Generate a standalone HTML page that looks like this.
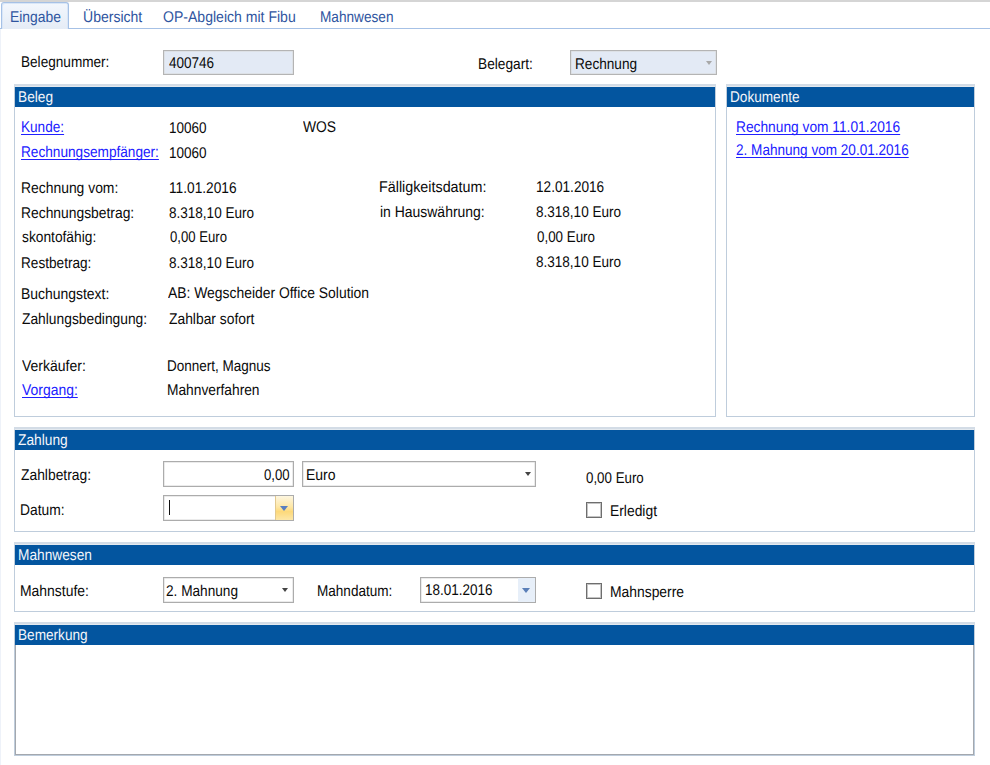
<!DOCTYPE html>
<html><head><meta charset="utf-8"><style>
html,body{margin:0;padding:0;}
body{width:990px;height:765px;overflow:hidden;background:#fff;position:relative;font-family:"Liberation Sans",sans-serif;}
.t{position:absolute;font-size:15.5px;line-height:18px;white-space:pre;transform-origin:0 0;text-rendering:geometricPrecision;}
.tab{color:#2f55a0;}
.lbl{color:#0a0a0a;}
.hdr{color:#f4f6fa;}
.lnk{color:#2020ff;text-decoration:underline;text-underline-offset:2px;text-decoration-thickness:1.3px;text-decoration-skip-ink:none;}
.abs{position:absolute;}
.pnl{position:absolute;border:1px solid #bfcddc;border-top:none;background:#fff;}
.hbar{position:absolute;left:0;right:0;top:0;height:3px;background:#d3dce6;}
.hbar2{position:absolute;left:0;right:0;top:2px;height:1px;background:#e3e9ef;}
.blue{position:absolute;left:0;right:0;top:3px;height:20px;background:#03559f;}
.box{position:absolute;border:1px solid #acacac;box-shadow:inset 0 0 0 0.5px #d8d8d8;background:#fff;box-sizing:border-box;}
.cb{position:absolute;width:16px;height:16px;box-sizing:border-box;border:1px solid #6e6e6e;box-shadow:inset 0 0 0 1px #c4c4c4;background:#fff;}
</style></head><body>
<div class="abs" style="left:0;top:0;width:990px;height:2px;background:#d5d5d5"></div>
<div class="abs" style="left:0;top:28px;width:990px;height:1px;background:#a6c1e6"></div>
<div class="abs" style="left:0;top:29px;width:1px;height:736px;background:#eef2f9"></div>
<div class="abs" style="left:1px;top:2px;width:66px;height:26px;border:1px solid #a6c1e6;border-bottom:none;border-radius:3px 3px 0 0;background:linear-gradient(#f3f7fd,#e5ecf6);box-shadow:inset 1px 1px 0 #d9e6f7,inset -1px 0 0 #d9e6f7"></div>

<div class="box" style="left:163px;top:50px;width:131px;height:25px;background:#e3eaf5;border-color:#b4b4b4"></div>
<div class="box" style="left:570px;top:50px;width:147px;height:25px;background:#e3eaf5;border-color:#b4b4b4"></div>
<div class="abs" style="left:706px;top:61px;width:0;height:0;border-left:3.5px solid transparent;border-right:3.5px solid transparent;border-top:4px solid #a8a8a8"></div>

<div class="pnl" style="left:14px;top:84px;width:700px;height:332px"></div>
<div class="abs" style="left:14px;top:84px;width:702px;height:3px;background:#d3dce6"></div>
<div class="abs" style="left:15px;top:86px;width:700px;height:1px;background:#e3e9ef"></div>
<div class="abs" style="left:15px;top:87px;width:700px;height:20px;background:#03559f"></div>

<div class="pnl" style="left:726px;top:84px;width:247px;height:332px"></div>
<div class="abs" style="left:726px;top:84px;width:249px;height:3px;background:#d3dce6"></div>
<div class="abs" style="left:727px;top:86px;width:247px;height:1px;background:#e3e9ef"></div>
<div class="abs" style="left:727px;top:87px;width:247px;height:20px;background:#03559f"></div>

<div class="pnl" style="left:14px;top:427px;width:959px;height:104px"></div>
<div class="abs" style="left:14px;top:427px;width:961px;height:3px;background:#d3dce6"></div>
<div class="abs" style="left:15px;top:429px;width:959px;height:1px;background:#e3e9ef"></div>
<div class="abs" style="left:15px;top:430px;width:959px;height:20px;background:#03559f"></div>

<div class="pnl" style="left:14px;top:542px;width:959px;height:69px"></div>
<div class="abs" style="left:14px;top:542px;width:961px;height:3px;background:#d3dce6"></div>
<div class="abs" style="left:15px;top:544px;width:959px;height:1px;background:#e3e9ef"></div>
<div class="abs" style="left:15px;top:545px;width:959px;height:20px;background:#03559f"></div>

<div class="pnl" style="left:14px;top:622px;width:959px;height:133px"></div>
<div class="abs" style="left:14px;top:622px;width:961px;height:3px;background:#d3dce6"></div>
<div class="abs" style="left:15px;top:624px;width:959px;height:1px;background:#e3e9ef"></div>
<div class="abs" style="left:15px;top:625px;width:959px;height:20px;background:#03559f"></div>
<div class="abs" style="left:15px;top:645px;width:957px;height:109px;border:1px solid #a4a8ae;border-top:none"></div>

<div class="box" style="left:163px;top:461px;width:131px;height:26px"></div>
<div class="box" style="left:302px;top:461px;width:234px;height:26px"></div>
<div class="abs" style="left:525px;top:472px;width:0;height:0;border-left:3.5px solid transparent;border-right:3.5px solid transparent;border-top:4px solid #444"></div>
<div class="box" style="left:163px;top:495px;width:131px;height:26px"></div>
<div class="abs" style="left:275px;top:496px;width:1px;height:24px;background:#e2c98f"></div>
<div class="abs" style="left:276px;top:496px;width:17px;height:24px;background:linear-gradient(#fdf6e0,#fee7a6 45%,#fdd97a 65%,#fde7a8)"></div>
<div class="abs" style="left:280px;top:506px;width:0;height:0;border-left:4.5px solid transparent;border-right:4.5px solid transparent;border-top:5px solid #5a7fc0"></div>
<div class="abs" style="left:169px;top:500px;width:1px;height:15px;background:#111"></div>
<div class="cb" style="left:586px;top:502px"></div>

<div class="box" style="left:163px;top:577px;width:131px;height:26px"></div>
<div class="abs" style="left:282px;top:588px;width:0;height:0;border-left:3.5px solid transparent;border-right:3.5px solid transparent;border-top:4px solid #444"></div>
<div class="box" style="left:420px;top:577px;width:116px;height:26px"></div>
<div class="abs" style="left:518px;top:578px;width:17px;height:24px;background:#e7eff9"></div>
<div class="abs" style="left:522px;top:588px;width:0;height:0;border-left:4.5px solid transparent;border-right:4.5px solid transparent;border-top:5px solid #5a7fb8"></div>
<div class="cb" style="left:586px;top:583px"></div>

<div class="t tab" style="left:9.70px;top:9px;transform:scaleX(0.8964)">Eingabe</div>
<div class="t tab" style="left:82.50px;top:9px;transform:scaleX(0.9046)">Übersicht</div>
<div class="t tab" style="left:163.29px;top:9px;transform:scaleX(0.9062)">OP-Abgleich mit Fibu</div>
<div class="t tab" style="left:320.12px;top:9px;transform:scaleX(0.8793)">Mahnwesen</div>
<div class="t lbl" style="left:21.22px;top:54px;transform:scaleX(0.8768)">Belegnummer:</div>
<div class="t lbl" style="left:168.60px;top:55px;transform:scaleX(0.8725)">400746</div>
<div class="t lbl" style="left:477.72px;top:56px;transform:scaleX(0.8833)">Belegart:</div>
<div class="t lbl" style="left:574.92px;top:56px;transform:scaleX(0.8783)">Rechnung</div>
<div class="t hdr" style="left:17.92px;top:89px;transform:scaleX(0.8842)">Beleg</div>
<div class="t hdr" style="left:730.12px;top:89px;transform:scaleX(0.8782)">Dokumente</div>
<div class="t hdr" style="left:18.00px;top:432px;transform:scaleX(0.8873)">Zahlung</div>
<div class="t hdr" style="left:17.72px;top:547px;transform:scaleX(0.8841)">Mahnwesen</div>
<div class="t hdr" style="left:17.72px;top:627px;transform:scaleX(0.8782)">Bemerkung</div>
<div class="t lnk" style="left:21.02px;top:119px;transform:scaleX(0.8766)">Kunde:</div>
<div class="t lbl" style="left:168.83px;top:120px;transform:scaleX(0.8714)">10060</div>
<div class="t lbl" style="left:303.40px;top:119px;transform:scaleX(0.8946)">WOS</div>
<div class="t lnk" style="left:21.42px;top:144px;transform:scaleX(0.8794)">Rechnungsempfänger:</div>
<div class="t lbl" style="left:168.83px;top:145px;transform:scaleX(0.8714)">10060</div>
<div class="t lbl" style="left:21.20px;top:180px;transform:scaleX(0.8962)">Rechnung vom:</div>
<div class="t lbl" style="left:168.62px;top:180px;transform:scaleX(0.8840)">11.01.2016</div>
<div class="t lbl" style="left:379.48px;top:179px;transform:scaleX(0.9237)">Fälligkeitsdatum:</div>
<div class="t lbl" style="left:536.02px;top:179px;transform:scaleX(0.8789)">12.01.2016</div>
<div class="t lbl" style="left:21.11px;top:205px;transform:scaleX(0.8935)">Rechnungsbetrag:</div>
<div class="t lbl" style="left:168.63px;top:205px;transform:scaleX(0.8729)">8.318,10 Euro</div>
<div class="t lbl" style="left:379.50px;top:204px;transform:scaleX(0.9000)">in Hauswährung:</div>
<div class="t lbl" style="left:536.03px;top:204px;transform:scaleX(0.8729)">8.318,10 Euro</div>
<div class="t lbl" style="left:22.00px;top:229px;transform:scaleX(0.8878)">skontofähig:</div>
<div class="t lbl" style="left:169.50px;top:229px;transform:scaleX(0.8478)">0,00 Euro</div>
<div class="t lbl" style="left:536.90px;top:229px;transform:scaleX(0.8627)">0,00 Euro</div>
<div class="t lbl" style="left:21.12px;top:255px;transform:scaleX(0.8782)">Restbetrag:</div>
<div class="t lbl" style="left:168.63px;top:255px;transform:scaleX(0.8729)">8.318,10 Euro</div>
<div class="t lbl" style="left:536.03px;top:254px;transform:scaleX(0.8729)">8.318,10 Euro</div>
<div class="t lbl" style="left:20.90px;top:286px;transform:scaleX(0.8990)">Buchungstext:</div>
<div class="t lbl" style="left:167.80px;top:285px;transform:scaleX(0.8964)">AB: Wegscheider Office Solution</div>
<div class="t lbl" style="left:22.00px;top:311px;transform:scaleX(0.8906)">Zahlungsbedingung:</div>
<div class="t lbl" style="left:169.00px;top:311px;transform:scaleX(0.8937)">Zahlbar sofort</div>
<div class="t lbl" style="left:22.00px;top:358px;transform:scaleX(0.9029)">Verkäufer:</div>
<div class="t lbl" style="left:167.43px;top:358px;transform:scaleX(0.8712)">Donnert, Magnus</div>
<div class="t lnk" style="left:22.00px;top:382px;transform:scaleX(0.8984)">Vorgang:</div>
<div class="t lbl" style="left:167.41px;top:382px;transform:scaleX(0.8874)">Mahnverfahren</div>
<div class="t lnk" style="left:736.21px;top:119px;transform:scaleX(0.8874)">Rechnung vom 11.01.2016</div>
<div class="t lnk" style="left:736.23px;top:142px;transform:scaleX(0.8750)">2. Mahnung vom 20.01.2016</div>
<div class="t lbl" style="left:21.00px;top:467px;transform:scaleX(0.8935)">Zahlbetrag:</div>
<div class="t lbl" style="left:264.10px;top:467px;transform:scaleX(0.8500)">0,00</div>
<div class="t lbl" style="left:305.90px;top:467px;transform:scaleX(0.9032)">Euro</div>
<div class="t lbl" style="left:585.50px;top:470px;transform:scaleX(0.8597)">0,00 Euro</div>
<div class="t lbl" style="left:20.11px;top:502px;transform:scaleX(0.8917)">Datum:</div>
<div class="t lbl" style="left:609.71px;top:503px;transform:scaleX(0.8942)">Erledigt</div>
<div class="t lbl" style="left:20.10px;top:583px;transform:scaleX(0.8987)">Mahnstufe:</div>
<div class="t lbl" style="left:166.22px;top:583px;transform:scaleX(0.8800)">2. Mahnung</div>
<div class="t lbl" style="left:317.33px;top:583px;transform:scaleX(0.8738)">Mahndatum:</div>
<div class="t lbl" style="left:425.33px;top:582px;transform:scaleX(0.8697)">18.01.2016</div>
<div class="t lbl" style="left:609.90px;top:584px;transform:scaleX(0.8951)">Mahnsperre</div>
</body></html>
